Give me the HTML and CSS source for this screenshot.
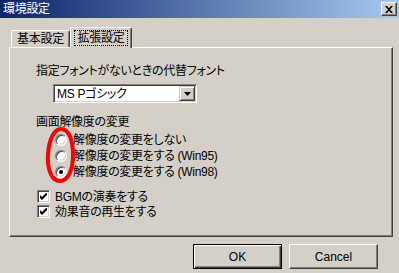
FILE: index.html
```html
<!DOCTYPE html>
<html lang="ja">
<head>
<meta charset="utf-8">
<title>環境設定</title>
<link rel="stylesheet" href="styles.css">
</head>
<body>
<div class="window">
  <div class="titlebar">
    <span class="title">環境設定</span>
    <span class="close"><svg width="8" height="7" viewBox="0 0 8 7"><path d="M0 0h2l2 2.2L6 0h2L5 3.5L8 7H6L4 4.8L2 7H0l3-3.5z" fill="#000"/></svg></span>
  </div>
  <div class="tabs">
    <div class="tab">基本設定</div>
    <div class="tab active"><span class="focus">拡張設定</span></div>
  </div>
  <div class="panel">
    <div class="label">指定フォントがないときの代替フォント</div>
    <div class="combo">
      <span class="combo-text">MS Pゴシック</span>
      <span class="drop"><svg width="7" height="4" viewBox="0 0 7 4"><path d="M0 0h7L3.5 4z" fill="#000"/></svg></span>
    </div>
    <div class="label group">画面解像度の変更</div>
    <div class="radios">
      <div class="option"><span class="radio"></span><span class="text">解像度の変更をしない</span></div>
      <div class="option"><span class="radio"></span><span class="text">解像度の変更をする (Win95)</span></div>
      <div class="option"><span class="radio checked"></span><span class="text">解像度の変更をする (Win98)</span></div>
    </div>
    <div class="checks">
      <div class="option"><span class="check"><svg width="7" height="7" viewBox="0 0 7 7"><path d="M0 2v3l2 2l5-5v-3l-5 5z" fill="#000"/></svg></span><span class="text">BGMの演奏をする</span></div>
      <div class="option"><span class="check"><svg width="7" height="7" viewBox="0 0 7 7"><path d="M0 2v3l2 2l5-5v-3l-5 5z" fill="#000"/></svg></span><span class="text">効果音の再生をする</span></div>
    </div>
    <svg class="mark" width="34" height="60" viewBox="0 0 34 60"><path d="M17 3C10 3 5 14 4 28C3 42 7 55 16 55C24 55 29 44 29 29C29 14 25 3 17 3z" fill="none" stroke="#f00" stroke-width="4"/></svg>
  </div>
  <div class="buttons">
    <button class="btn default">OK</button>
    <button class="btn">Cancel</button>
  </div>
</div>
</body>
</html>
```

FILE: styles.css
```css
html, body {
  margin: 0;
  padding: 0;
}
body {
  width: 399px;
  height: 273px;
  overflow: hidden;
  background: #d4d0c8;
  font-family: "Liberation Sans", "Noto Sans CJK JP", sans-serif;
  font-size: 12px;
  color: #000;
  font-feature-settings: "palt";
  letter-spacing: -0.3px;
}
.window {
  width: 399px;
  height: 273px;
  display: flex;
  flex-direction: column;
}
.titlebar {
  height: 18px;
  display: flex;
  align-items: center;
  justify-content: space-between;
  background: linear-gradient(to right, #0a246a, #a6caf0);
  color: #fff;
  padding-left: 3px;
  padding-right: 2px;
}
.title {
  line-height: 14px;
}
.close {
  width: 16px;
  height: 14px;
  box-sizing: border-box;
  background: #d4d0c8;
  border: 1px solid;
  border-color: #fff #404040 #404040 #fff;
  box-shadow: inset -1px -1px #808080;
  display: flex;
  align-items: center;
  justify-content: center;
}
.tabs {
  margin-top: 9px;
  height: 20px;
  display: flex;
  align-items: flex-end;
  padding-left: 11px;
}
.tab {
  box-sizing: border-box;
  height: 17px;
  width: 59px;
  border-left: 1px solid #fff;
  border-top: 1px solid #fff;
  border-right: 1px solid #404040;
  border-top-left-radius: 2px;
  border-top-right-radius: 2px;
  box-shadow: inset -1px 0 #808080;
  display: flex;
  align-items: center;
  justify-content: center;
  line-height: 14px;
}
.tab.active {
  height: 21px;
  width: 62px;
  margin-bottom: -1px;
  background: #d4d0c8;
  position: relative;
  z-index: 1;
}
.focus {
  border: 1px dotted #000;
  padding: 0 3px;
  line-height: 14px;
}
.panel {
  position: relative;
  box-sizing: border-box;
  height: 190px;
  margin: 0 6px 0 9px;
  border: 1px solid;
  border-color: #fff #404040 #404040 #fff;
  box-shadow: inset -1px -1px #808080;
  padding: 16px 0 0 26px;
  display: flex;
  flex-direction: column;
  align-items: flex-start;
}
.label {
  line-height: 14px;
  height: 14px;
}
.combo {
  margin-top: 6px;
  margin-left: 17px;
  box-sizing: border-box;
  width: 144px;
  height: 19px;
  background: #fff;
  border: 1px solid;
  border-color: #808080 #fff #fff #808080;
  box-shadow: inset 1px 1px #404040, inset -1px -1px #d4d0c8;
  padding: 1px;
  display: flex;
  align-items: center;
  justify-content: space-between;
}
.combo-text {
  padding-left: 2px;
  line-height: 14px;
}
.drop {
  box-sizing: border-box;
  width: 16px;
  height: 15px;
  background: #d4d0c8;
  border: 1px solid;
  border-color: #d4d0c8 #404040 #404040 #d4d0c8;
  box-shadow: inset 1px 1px #fff, inset -1px -1px #808080;
  display: flex;
  align-items: center;
  justify-content: center;
}
.label.group {
  margin-top: 12px;
}
.radios {
  margin-top: 3px;
  padding-left: 19px;
  display: flex;
  flex-direction: column;
}
.option {
  display: flex;
  align-items: center;
  height: 16px;
}
.text {
  line-height: 14px;
  height: 14px;
}
.radio {
  box-sizing: border-box;
  width: 12px;
  height: 12px;
  border-radius: 50%;
  background: #fff;
  border: 1px solid;
  border-color: #808080 #fff #fff #808080;
  box-shadow: inset 1px 1px #404040, inset -1px -1px #d4d0c8;
  margin-right: 6px;
  display: flex;
  align-items: center;
  justify-content: center;
}
.radio.checked::after {
  content: "";
  width: 4px;
  height: 4px;
  border-radius: 50%;
  background: #000;
}
.checks {
  margin-top: 9px;
  padding-left: 1px;
  display: flex;
  flex-direction: column;
}
.checks .option {
  height: 15px;
}
.check {
  box-sizing: border-box;
  width: 13px;
  height: 13px;
  background: #fff;
  border: 1px solid;
  border-color: #808080 #fff #fff #808080;
  box-shadow: inset 1px 1px #404040, inset -1px -1px #d4d0c8;
  margin-right: 5px;
  display: flex;
  align-items: center;
  justify-content: center;
}
.mark {
  position: absolute;
  left: 34px;
  top: 78px;
}
.buttons {
  margin-top: 7px;
  display: flex;
  justify-content: flex-end;
  gap: 7px;
  padding-right: 21px;
}
.btn {
  box-sizing: border-box;
  width: 89px;
  height: 25px;
  margin: 0;
  padding: 0;
  background: #d4d0c8;
  font-family: "Liberation Sans", "Noto Sans CJK JP", sans-serif;
  font-size: 12px;
  color: #000;
  border: 1px solid;
  border-color: #fff #404040 #404040 #fff;
  box-shadow: inset -1px -1px #808080;
}
.btn.default {
  border: 1px solid #000;
  box-shadow: inset 1px 1px #fff, inset -1px -1px #404040, inset -2px -2px #808080;
}
```
